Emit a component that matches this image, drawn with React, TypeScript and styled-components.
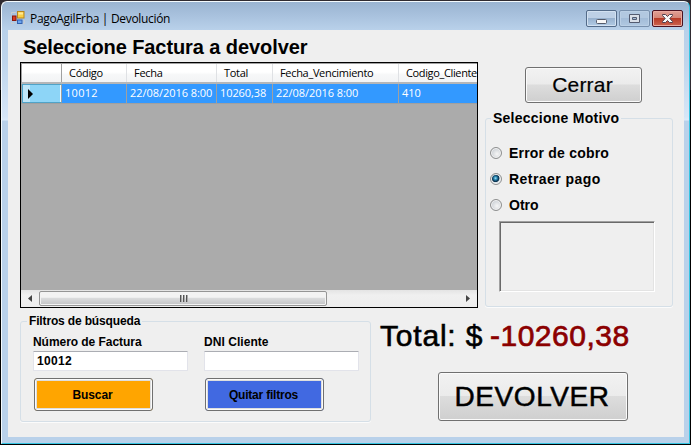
import React, { useState } from 'react';
import styled, { createGlobalStyle, css } from 'styled-components';

const Global = createGlobalStyle`
  * { box-sizing: border-box; }
  html, body { margin: 0; padding: 0; background: #000; overflow: hidden; }
  button, input, textarea { font: inherit; color: inherit; }
`;

const sans = '"Liberation Sans", Arial, sans-serif';
const ui = '"Open Sans", "Noto Sans", sans-serif';

const Window = styled.div`
  width: 691px;
  height: 445px;
  padding: 1px;
  background: linear-gradient(#2f2a30 0 90px, #000 90px);
  font-family: ${sans};
  color: #000;
`;
const Frame = styled.div`
  height: 443px;
  border: 1px solid #f4fafd;
  border-right: 1px solid #35c5e2;
  border-bottom: 1px solid #35c5e2;
  border-radius: 6px 6px 0 0;
  padding: 0 5px 6px 6px;
  background: linear-gradient(#9ab4d1 0, #a9c2de 14px, #b9d1ea 28px, #bfd5ec 60px, #d6e6f7 115px, #dcebfa 118px, #b9d1ea 119px);
  display: flex;
  flex-direction: column;
`;
const TitleBar = styled.header`
  height: 28px;
  display: flex;
  align-items: flex-start;
  padding: 0 1px 0 3px;
`;
const AppIcon = styled.svg`
  margin-top: 9px;
  width: 14px;
  height: 14px;
`;
const Caption = styled.h1<{ $ls: number }>`
  margin: 8px 0 0 5px;
  font: 400 12px/17px ${ui};
  letter-spacing: ${p => p.$ls}px;
  flex: 1;
`;
const Controls = styled.div`
  display: flex;
  gap: 2px;
  margin-top: 8px;
`;
const Control = styled.button<{ $kind: 'min' | 'max' | 'close' }>`
  width: 31px;
  height: 17px;
  padding: 0;
  display: grid;
  place-items: center;
  border-radius: 2px;
  border: 1px solid #536b89;
  box-shadow: inset 0 0 0 1px #d2e1f1;
  background: linear-gradient(#bdd0e6 0 45%, #98b2cf 50%, #b1cbe5);
  ${p => p.$kind === 'max' && css`
    border-color: #7890ad;
    box-shadow: inset 0 0 0 1px #bacfe5;
    background: linear-gradient(#b2c8e0 0 45%, #a3bcd8 50%, #b0c8e1);
  `}
  ${p => p.$kind === 'close' && css`
    border-color: #4b1120;
    box-shadow: inset 0 0 0 1px #e9aaa0;
    background: linear-gradient(#e0a096 0, #d58678 45%, #b83b27 50%, #cc6450);
  `}
  svg { display: block; }
`;
const Client = styled.main`
  flex: 1;
  width: 676px;
  background: #efefef;
  padding: 5px 0 0 12px;
`;
const Heading = styled.h2`
  margin: 0;
  padding-left: 3px;
  height: 27px;
  font: 700 20px/24px ${sans};
  letter-spacing: -0.08px;
  white-space: nowrap;
`;
const Upper = styled.div`
  display: flex;
  gap: 7px;
  height: 246px;
`;
const Side = styled.aside`
  width: 188px;
  padding-top: 5px;
`;
const PushButton = styled.button<{ $w: number; $h: number; $size: number; $ls: number }>`
  display: block;
  width: ${p => p.$w}px;
  height: ${p => p.$h}px;
  padding: 0 2px 0 0;
  border: 1px solid #707070;
  border-radius: 3px;
  box-shadow: inset 0 0 0 1px #fbfbfb;
  background: linear-gradient(#f2f2f2 0, #ebebeb 48%, #dddddd 49%, #cfcfcf);
  font-size: ${p => p.$size}px;
  letter-spacing: ${p => p.$ls}px;
  -webkit-text-stroke: ${p => (p.$size > 22 ? 0.5 : 0.2)}px #000;
  white-space: nowrap;
`;
const CloseSlot = styled.div`
  padding: 0 0 7px 40px;
`;

const DataGrid = styled.section`
  width: 458px;
  border: 1px solid #000;
  background: #ababab;
  display: flex;
  flex-direction: column;
  overflow: hidden;
`;
const GridLine = styled.div`
  display: grid;
  grid-template-columns: 40px 65px 90px 56px 126px 79px;
  flex: none;
  border-left: 1px solid #a0a0a0;
`;
const HeaderLine = styled(GridLine)`
  height: 21px;
  background: linear-gradient(#fff 0 45%, #f6f7f8 60%, #f3f4f5);
  border-top: 1px solid #a0a0a0;
  border-bottom: 2px solid #b4b6b8;
`;
const HeadCell = styled.div<{ $ls?: number }>`
  border-right: 1px solid #dfe1e4;
  padding-left: 7px;
  font: 400 11px/18px ${ui};
  letter-spacing: ${p => p.$ls ?? 0}px;
  white-space: nowrap;
  overflow: hidden;
  &:first-child { border-right-color: #a0a0a0; }
`;
const DataLine = styled(GridLine)`
  height: 20px;
  background: #3399ff;
  border-bottom: 1px solid #a0a0a0;
`;
const RowHead = styled.div`
  border: 1px solid #4fa3c8;
  border-right: 1px solid #a0a0a0;
  box-shadow: inset 7px 0 #c0e6f8, inset -1px 0 #f0fbff;
  background: #8dd5f7;
  padding: 4px 0 0 4px;
`;
const Cell = styled.div<{ $ls?: number }>`
  border-right: 1px solid #a0a0a0;
  padding-left: 3px;
  color: #fff;
  font: 400 11px/18px ${ui};
  letter-spacing: ${p => p.$ls ?? 0}px;
  white-space: nowrap;
  overflow: hidden;
`;
const GridSpace = styled.div`
  flex: 1;
`;
const ScrollBar = styled.div`
  height: 17px;
  display: flex;
  align-items: center;
  background: linear-gradient(#e4e4e4, #f0f0f0 30%, #ededed);
`;
const ScrollArrow = styled.div`
  width: 18px;
  display: grid;
  place-items: center;
`;
const Thumb = styled.div`
  width: 288px;
  height: 15px;
  border: 1px solid #959595;
  border-radius: 2px;
  box-shadow: inset 0 0 0 1px #f3f3f3;
  background: linear-gradient(#f3f3f3 0 40%, #dadbdc 50%, #c3c4c6);
  display: grid;
  place-items: center;
`;
const Track = styled.div`
  flex: 1;
`;

const Group = styled.fieldset<{ $w: number; $h: number }>`
  margin: 0;
  width: ${p => p.$w}px;
  height: ${p => p.$h}px;
  min-width: 0;
  padding: 0;
  border: 1px solid #d5dfe7;
  border-radius: 3px;
  box-shadow: 0 1px 0 #fbfbfb;
`;
const Legend = styled.legend<{ $size: number; $ls: number; $x: number }>`
  margin-left: ${p => p.$x}px;
  padding: 0 2px;
  font-weight: 700;
  font-size: ${p => p.$size}px;
  line-height: 16px;
  letter-spacing: ${p => p.$ls}px;
  white-space: nowrap;
`;
const Options = styled.div`
  padding: 14px 0 0 4px;
  display: flex;
  flex-direction: column;
`;
const Option = styled.label<{ $ls: number }>`
  height: 26px;
  display: flex;
  align-items: center;
  gap: 7px;
  font-size: 14px;
  font-weight: 700;
  letter-spacing: ${p => p.$ls}px;
  white-space: nowrap;
`;
const Radio = styled.input`
  appearance: none;
  flex: none;
  width: 12px;
  height: 12px;
  margin: 0;
  border: 1px solid #8e8f8f;
  border-radius: 50%;
  background: radial-gradient(circle at 60% 60%, #f6f6f6, #c9ced3 75%);
  box-shadow: inset 0 0 0 1px #f3f3f3;
  &:checked {
    background: radial-gradient(circle at 45% 42%, #a9e3f7 0, #2f8fb9 1.5px, #0b3c5e 3px, #12344d 3.6px, #d9e2e8 4.3px);
  }
`;
const Reason = styled.textarea`
  display: block;
  width: 156px;
  height: 71px;
  margin: 3px 0 0 13px;
  padding: 2px;
  resize: none;
  outline: none;
  background: #efefef;
  border: 1px solid #a0a0a0;
  border-right-color: #fff;
  border-bottom-color: #fff;
  box-shadow: inset 1px 1px #696969, inset -1px -1px #e3e3e3;
`;

const Lower = styled.div`
  display: flex;
  padding-top: 5px;
`;
const Filters = styled.div`
  display: grid;
  grid-template-columns: 155px 155px;
  column-gap: 16px;
  padding: 5px 0 0 12px;
`;
const Field = styled.label<{ $ls: number }>`
  display: block;
  font-size: 12px;
  font-weight: 700;
  line-height: 16px;
  letter-spacing: ${p => p.$ls}px;
`;
const TextBox = styled.input`
  display: block;
  width: 155px;
  height: 20px;
  margin-top: 1px;
  padding: 0 3px;
  outline: none;
  border: 1px solid #e2e3ea;
  border-top-color: #abadb3;
  border-radius: 1px;
  background: #fff;
  font-weight: 700;
  font-size: 12px;
  letter-spacing: 0.3px;
`;
const ColorButton = styled.button<{ $fill: string; $ls: number }>`
  width: 119px;
  height: 33px;
  margin: 7px 0 0 1px;
  padding: 0 2px 0 0;
  border: 1px solid #707070;
  border-radius: 3px;
  background: ${p => p.$fill};
  box-shadow: inset 0 0 0 1px #fbfbfb, inset 0 0 0 2px #dedede;
  font-weight: 700;
  font-size: 12px;
  letter-spacing: ${p => p.$ls}px;
`;
const Summary = styled.div`
  padding: 6px 0 0 9px;
`;
const Total = styled.div`
  height: 35px;
  display: flex;
  font-size: 30px;
  line-height: 34px;
  white-space: nowrap;
`;
const TotalLabel = styled.span`
  width: 110px;
  letter-spacing: 0.8px;
  -webkit-text-stroke: 0.6px #000;
`;
const Amount = styled.span`
  color: #8b0000;
  letter-spacing: 0.5px;
  -webkit-text-stroke: 0.7px #8b0000;
`;
const SubmitSlot = styled.div`
  padding: 18px 0 0 58px;
`;

const reasons = [
  { text: 'Error de cobro', ls: 0.2 },
  { text: 'Retraer pago', ls: 0.45 },
  { text: 'Otro', ls: 0 },
];
const columns = [
  { title: 'Código', value: '10012', hls: -0.3, cls: 0.3 },
  { title: 'Fecha', value: '22/08/2016 8:00', hls: -0.3, cls: -0.05 },
  { title: 'Total', value: '10260,38', hls: -0.3, cls: -0.1 },
  { title: 'Fecha_Vencimiento', value: '22/08/2016 8:00', hls: -0.32, cls: -0.05 },
  { title: 'Codigo_Cliente', value: '410', hls: -0.36, cls: 0 },
];

export default function App() {
  const [reason, setReason] = useState('Retraer pago');
  return (
    <Window>
      <Global />
      <Frame>
        <TitleBar>
          <AppIcon viewBox="0 0 14 14">
            <path d="M.5 3.5V1.5H5M3 12.5H.5V11M12 12.5h1.500V9" fill="none" stroke="#c9ccd0" />
            <rect x="6.500" y=".5" width="6.500" height="6.500" fill="#f9cf45" stroke="#b8851c" />
            <path d="M7.500 1.500h4.500v2h-4.500z" fill="#ffe998" />
            <rect x="1.500" y="5" width="3.500" height="4.500" fill="#d83a20" stroke="#8b170d" />
            <rect x="6.500" y="9" width="4.500" height="3.500" fill="#6ba4ee" stroke="#315fae" />
          </AppIcon>
          <Caption $ls={-0.32}>PagoAgilFrba | Devolución</Caption>
          <Controls>
            <Control $kind="min" aria-label="Minimizar">
              <svg width="13" height="13"><rect x="1.500" y="7.500" width="10" height="4" rx="1" fill="#f7f7f7" stroke="#545b6b" /></svg>
            </Control>
            <Control $kind="max" aria-label="Maximizar">
              <svg width="13" height="11"><path d="M1.500 1.500h10v8h-10zM4.500 4.500v2h4v-2z" fill="#d9dfe8" fillRule="evenodd" stroke="#535b70" /></svg>
            </Control>
            <Control $kind="close" aria-label="Cerrar ventana">
              <svg width="13" height="11"><path d="M1.500 1.500h3l2 2 2-2h3v1l-2.700 3 2.700 3v1h-3l-2-2-2 2h-3v-1l2.700-3-2.700-3z" fill="#f8f8f8" stroke="#50404f" /></svg>
            </Control>
          </Controls>
        </TitleBar>
        <Client>
          <Heading>Seleccione Factura a devolver</Heading>
          <Upper>
            <DataGrid>
              <HeaderLine>
                <HeadCell />
                {columns.map(c => <HeadCell key={c.title} $ls={c.hls}>{c.title}</HeadCell>)}
              </HeaderLine>
              <DataLine>
                <RowHead>
                  <svg width="6" height="10" viewBox="0 0 6 10" display="block"><path d="M1 0l5 5-5 5z" /></svg>
                </RowHead>
                {columns.map(c => <Cell key={c.title} $ls={c.cls}>{c.value}</Cell>)}
              </DataLine>
              <GridSpace />
              <ScrollBar>
                <ScrollArrow><svg width="4" height="7"><path d="M4 0v7L0 3.500z" fill="#444" /></svg></ScrollArrow>
                <Thumb>
                  <svg width="9" height="7"><path d="M1.500 0v7M4.500 0v7M7.500 0v7" stroke="#555" /><path d="M2.500 0v7M5.500 0v7M8.500 0v7" stroke="#aaa" /></svg>
                </Thumb>
                <Track />
                <ScrollArrow><svg width="4" height="7"><path d="M0 0v7l4-3.500z" fill="#444" /></svg></ScrollArrow>
              </ScrollBar>
            </DataGrid>
            <Side>
              <CloseSlot><PushButton $w={117} $h={36} $size={21} $ls={0.2}>Cerrar</PushButton></CloseSlot>
              <Group $w={188} $h={197}>
                <Legend $size={14} $ls={0.25} $x={5}>Seleccione Motivo</Legend>
                <Options>
                  {reasons.map(r => (
                    <Option key={r.text} $ls={r.ls}>
                      <Radio type="radio" name="motivo" checked={reason === r.text} onChange={() => setReason(r.text)} />
                      {r.text}
                    </Option>
                  ))}
                </Options>
                <Reason />
              </Group>
            </Side>
          </Upper>
          <Lower>
            <Group $w={351} $h={109}>
              <Legend $size={12} $ls={-0.15} $x={6}>Filtros de búsqueda</Legend>
              <Filters>
                <Field $ls={-0.05}>Número de Factura<TextBox defaultValue="10012" /></Field>
                <Field $ls={0.05}>DNI Cliente<TextBox /></Field>
                <ColorButton $fill="#ffa500" $ls={-0.1}>Buscar</ColorButton>
                <ColorButton $fill="#4169e1" $ls={-0.2}>Quitar filtros</ColorButton>
              </Filters>
            </Group>
            <Summary>
              <Total><TotalLabel>Total: $</TotalLabel><Amount>-10260,38</Amount></Total>
              <SubmitSlot><PushButton $w={190} $h={49} $size={28} $ls={0.6}>DEVOLVER</PushButton></SubmitSlot>
            </Summary>
          </Lower>
        </Client>
      </Frame>
    </Window>
  );
}
